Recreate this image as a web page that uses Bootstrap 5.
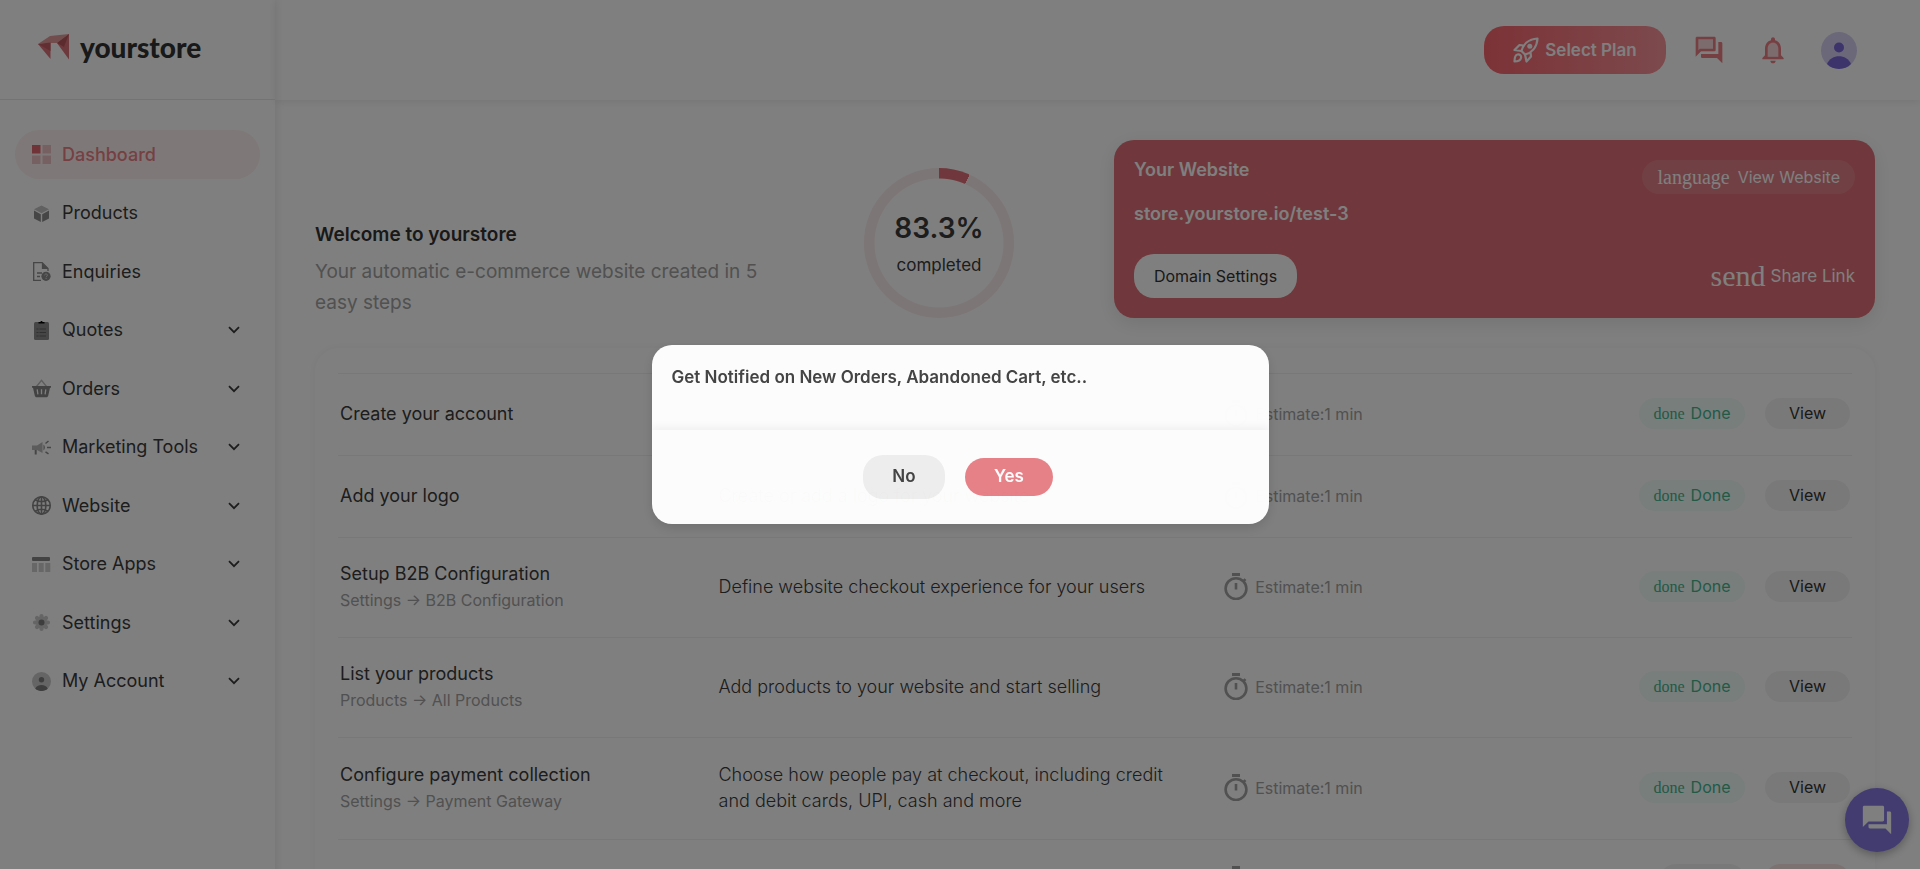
<!DOCTYPE html>
<html lang="en">
<head>
<meta charset="utf-8">
<meta name="viewport" content="width=device-width, initial-scale=1">
<title>yourstore – Dashboard</title>
<link href="https://cdn.jsdelivr.net/npm/bootstrap@5.3.0/dist/css/bootstrap.min.css" rel="stylesheet">
<style>
  :root { --brand: #ec8087; --brand-deep: #e07078; --ink: #3a3a3a; --soft: #a2a2a2; --line: #f0f0f0; }
  body { font-family: Inter, "Open Sans", sans-serif; font-size: 16px; line-height: 26px; color: var(--ink); background: #fff; min-height: 100vh; }
  .side { width: 275px; box-shadow: 2px 0 8px rgba(0,0,0,.08); z-index: 2; }
  .brand-bar { height: 100px; border-bottom: 1px solid #e6e6e6; padding: 0 37px 6px; gap: 10px; }
  .brand-name { font-family: Lato, sans-serif; font-weight: 900; font-size: 28px; line-height: 30px; color: #333; }
  .side-menu { height: 576px; margin: 30px 15px; }
  .side-link { height: 49px; padding: 0 20px 0 17px; border-radius: 25px; color: var(--ink); font-size: 18px; text-decoration: none; gap: 11px; }
  .side-link.active { background: #fff0f0; color: var(--brand); font-weight: 500; }
  .side-link .ico { width: 19px; height: 19px; flex: none; }
  .topbar { height: 100px; padding-right: 63px; gap: 32px; box-shadow: 0 2px 8px rgba(0,0,0,.08); }
  .plan-btn { width: 182px; height: 48px; border-radius: 20px; border: 0; color: #fff; font-weight: 600; font-size: 17px; background: linear-gradient(90deg,#f9666f,#f9949a); gap: 6px; margin-right: -5px; }
  .icon-btn { border: 0; background: none; padding: 0; line-height: 0; }
  .content { padding: 40px 45px 0 40px; }
  .welcome { width: 60%; }
  .welcome h1 { font-size: 19px; line-height: 26px; font-weight: 600; color: #333; }
  .welcome p { font-size: 19px; line-height: 31px; color: var(--soft); }
  .ring { width: 150px; height: 150px; border-radius: 50%; background: radial-gradient(closest-side,#fff 64px,transparent 65px), conic-gradient(var(--brand-deep) 24deg,#fbecec 0); }
  .ring strong { font-size: 28px; line-height: 40px; font-weight: 600; }
  .ring span { font-size: 17px; }
  .site-card { background: var(--brand-deep); color: #fff; border-radius: 20px; height: 178px; padding: 20px; box-shadow: 0 5px 20px rgba(0,0,0,.1); width: 761px; max-width: 100%; }
  .site-card .fw-semibold { font-size: 18px; line-height: 20px; }
  .serif-ico { font-family: "Liberation Serif", serif; }
  .view-site { height: 34px; padding: 0 15px; border-radius: 17px; background: rgba(255,255,255,.12); color: #fff; font-size: 16px; text-decoration: none; gap: 8px; }
  .view-site .serif-ico { font-size: 20px; }
  .domain-btn { height: 44px; width: 163px; border-radius: 20px; background: #fff; border: 0; font-size: 16px; color: #333; }
  .share { color: #fff; text-decoration: none; font-size: 17px; gap: 5px; }
  .share .serif-ico { font-size: 30px; }
  .steps { margin-top: 30px; padding: 25px 23px; border-radius: 24px; box-shadow: 0 0 10px rgba(0,0,0,.05); }
  .steps table { table-layout: fixed; width: 100%; }
  .steps tr { border-top: 1px solid var(--line); height: 82px; }
  .steps tr.tall { height: 100px; }
  .steps tr.taller { height: 102px; }
  .steps td { padding: 0 2px 2px; vertical-align: middle; }
  .step-title { font-size: 18px; }
  .step-path { font-size: 16px; color: var(--soft); }
  .step-text { font-size: 18px; font-weight: 300; }
  .estimate { font-size: 16px; color: var(--soft); gap: 7px; }
  .pill { height: 31px; border-radius: 16px; border: 0; font-size: 16px; line-height: 31px; padding: 0; }
  .pill-done { width: 106px; background: #f0fcf9; color: #45b58d; }
  .pill-done .serif-ico { font-size: 16px; margin-right: 6px; }
  .pill-view { width: 85px; background: #f3f3f3; color: #333; }
  .pill-pink { background: #fbe4e4; }
  .chat-fab { width: 64px; height: 64px; right: 11px; bottom: 17px; border: 0; background: #8578e0; box-shadow: 0 3px 10px rgba(0,0,0,.3); z-index: 5; }
  .ask { --bs-modal-width: 617px; }
  .ask .modal-content { border: 0; border-radius: 20px; overflow: hidden; background: #fff; opacity: .98; box-shadow: 0 4px 12px rgba(0,0,0,.12); }
  .ask-head { height: 85px; padding: 19px 20px; }
  .ask-head h2 { font-size: 17px; line-height: 26px; font-weight: 600; color: #444; }
  .ask-foot { height: 94px; gap: 20px; box-shadow: 0 -3px 8px rgba(0,0,0,.05); }
  .ask-foot button { border: 0; border-radius: 20px; font-size: 17px; font-weight: 600; padding: 0 0 2px; }
  .no-btn { width: 82px; height: 44px; background: #f0f0f0; color: #444; }
  .yes-btn { width: 88px; height: 38px; background: #ea8289; color: #fff; }
</style>
</head>
<body class="modal-open overflow-hidden">

<svg class="d-none">
  <symbol id="chev" viewBox="0 0 12 8"><path d="M1 1.2l5 5 5-5" fill="none" stroke="#3a3a3a" stroke-width="1.8"/></symbol>
  <symbol id="timer" viewBox="0 0 24 27"><path d="M8 0h8v3H8z"/><path d="M12 5.2a10.4 10.4 0 1 0 0 20.8 10.4 10.4 0 0 0 0-20.8zM12 10v6.5M19.5 8.2l2-2" fill="none" stroke="currentColor" stroke-width="2.6"/></symbol>
</svg>

<div class="d-flex min-vh-100">
  <aside class="side flex-shrink-0 position-relative">
    <div class="brand-bar d-flex align-items-center">
      <svg width="33" height="26" viewBox="0 0 33 26"><path d="M1 10L13 2 32 0 20 9H9z" fill="#e39a9c"/><path d="M1 10L13.500 25V9z" fill="#dc737a"/><path d="M1 10l12.500-1.500V17z" fill="#c45d64"/><path d="M32 0v25.500L20 9z" fill="#dc737a"/><path d="M32 0L20 9l7 4z" fill="#b9575d"/></svg>
      <span class="brand-name">yourstore</span>
    </div>
    <nav>
      <ul class="side-menu list-unstyled d-flex flex-column justify-content-between">
        <li><a href="#" class="side-link active d-flex align-items-center"><svg class="ico" viewBox="0 0 19 19"><path d="M0 0h8.5v8.5H0z" fill="#e0666e"/><path d="M10.5 0H19v8.500h-8.500zM0 10.500h8.500V19H0zM10.500 10.500H19V19h-8.500z" fill="#eec0c3"/></svg>Dashboard</a></li>
        <li><a href="#" class="side-link d-flex align-items-center"><svg class="ico" viewBox="0 0 19 19"><path d="M9.500 1.500L17 5.300 9.500 9.200 2 5.300z" fill="#c2c2c2"/><path d="M2 6.500l6.800 3.700V18L2 14.500zM17 6.500l-6.800 3.700V18l6.800-3.500z" fill="#8c8c8c"/></svg>Products</a></li>
        <li><a href="#" class="side-link d-flex align-items-center"><svg class="ico" viewBox="0 0 19 19"><path d="M9 18.300H1.700V.7h8.500L16 6.400V9M10.500.7v5.600H16M5 11h5M5 14.500h3" fill="none" stroke="#8c8c8c" stroke-width="1.300"/><path d="M10.300 1v5.300H16z" fill="#8c8c8c"/><circle cx="14" cy="14.300" r="4.600" fill="#8c8c8c"/><path d="M12.700 13.300c0-1.800 2.800-1.800 2.700 0 0 .9-1.300.9-1.300 2M14.100 16v1" fill="none" stroke="#ddd" stroke-width="1"/></svg>Enquiries</a></li>
        <li><a href="#" class="side-link d-flex align-items-center"><svg class="ico" viewBox="0 0 19 19"><rect x="2" y="1" width="15" height="18" rx="1.500" fill="#8c8c8c"/><path d="M6.500 2.500V1h1.800c.3-1.200 2.100-1.200 2.400 0h1.800v1.500z" fill="#000"/><path d="M4.500 8h2M7.500 8H14M4.500 11.500h2M7.500 11.500H14M4.500 15h2M7.500 15H14" stroke="#606060" stroke-width="1"/></svg>Quotes<svg class="ms-auto" width="12" height="8"><use href="#chev"/></svg></a></li>
        <li><a href="#" class="side-link d-flex align-items-center"><svg class="ico" viewBox="0 0 19 19"><path d="M4.500 7.500L9.500 1.300l5 6.200" fill="none" stroke="#bbb" stroke-width="1.400"/><path d="M0 7h19v1.800h-1l-1.800 8c-.2.900-.9 1.500-1.800 1.500H4.600c-.9 0-1.600-.6-1.800-1.500L1 8.800H0z" fill="#868686"/><path d="M5.200 10.300l.7 5M9.500 10.300v5M13.800 10.300l-.7 5" stroke="#fff" stroke-width="1.300"/></svg>Orders<svg class="ms-auto" width="12" height="8"><use href="#chev"/></svg></a></li>
        <li><a href="#" class="side-link d-flex align-items-center"><svg class="ico" viewBox="0 0 19 19"><path d="M0 7.500h5l5.500-3.500v11L5 12H0z" fill="#b8b8b8"/><path d="M2.700 12v4.500h2V12M11.500 6.500c1.800 1.500 1.800 4.500 0 6z" fill="#8c8c8c"/><path d="M13.500 5.500l3-2.500M15 9.500h4M13.500 13.800l3 2" stroke="#8c8c8c" stroke-width="1.500"/></svg>Marketing Tools<svg class="ms-auto" width="12" height="8"><use href="#chev"/></svg></a></li>
        <li><a href="#" class="side-link d-flex align-items-center"><svg class="ico" viewBox="0 0 19 19" fill="none" stroke="#868686" stroke-width="1.600"><circle cx="9.500" cy="9.500" r="8.700"/><ellipse cx="9.500" cy="9.500" rx="4.300" ry="8.700"/><path d="M9.500 1v17M1 9.500h17M3 3.800c4 2.400 9 2.400 13 0M3 15.200c4-2.400 9-2.400 13 0"/></svg>Website<svg class="ms-auto" width="12" height="8"><use href="#chev"/></svg></a></li>
        <li><a href="#" class="side-link d-flex align-items-center"><svg class="ico" viewBox="0 0 19 19"><rect y="2" width="18" height="4" rx="1" fill="#868686"/><path d="M0 8h5v9H0zM6.700 8h5v9h-5zM13.300 8h5v9h-5z" fill="#cfcfcf"/></svg>Store Apps<svg class="ms-auto" width="12" height="8"><use href="#chev"/></svg></a></li>
        <li><a href="#" class="side-link d-flex align-items-center"><svg class="ico" viewBox="0 0 19 19"><g stroke="#cacaca" stroke-width="4.200" stroke-linecap="round"><path d="M9.500 3v13M3 9.500h13M5 5l9 9M14 5l-9 9"/></g><circle cx="9.500" cy="9.500" r="3" fill="#7c7c7c"/></svg>Settings<svg class="ms-auto" width="12" height="8"><use href="#chev"/></svg></a></li>
        <li><a href="#" class="side-link d-flex align-items-center"><svg class="ico" viewBox="0 0 19 19"><circle cx="9.500" cy="9.500" r="9.500" fill="#cacaca"/><circle cx="9.500" cy="7.800" r="2.700" fill="#7c7c7c"/><path d="M3.300 16.700c1.500-5 10.900-5 12.400 0-3.400 3.100-9 3.100-12.400 0z" fill="#7c7c7c"/></svg>My Account<svg class="ms-auto" width="12" height="8"><use href="#chev"/></svg></a></li>
      </ul>
    </nav>
  </aside>

  <div class="flex-grow-1">
    <header class="topbar d-flex align-items-center justify-content-end">
      <button type="button" class="plan-btn d-flex align-items-center justify-content-center">
        <svg width="26" height="26" viewBox="0 0 26 26" fill="none" stroke="#fff" stroke-width="2.200" stroke-linejoin="round"><path d="M8.500 14C10 8 15 2 24.500 1.500 24 11 18 16 12 17.500z"/><circle cx="16.800" cy="9.200" r="2.500" fill="#fff" stroke="none"/><path d="M10.500 8.500L6.500 8l-5 5 7 1M17.500 15.500l.5 4-4.500 5-1.500-7M1.500 24.500c0-4 .5-6.500 3-7s4 1.500 3.500 3.500-3 3.500-6.500 3.500z"/></svg>
        Select Plan
      </button>
      <button type="button" class="icon-btn" aria-label="Messages"><svg width="32" height="32" viewBox="0 0 24 24"><path d="M3 3h13v10H6l-3 3z" fill="#f9d9da"/><path fill="#ec8087" d="M15 4v7H5.170L4 12.170V4h11m1-2H3c-.55 0-1 .45-1 1v14l4-4h10c.55 0 1-.45 1-1V3c0-.55-.45-1-1-1zm5 4h-2v9H6v2c0 .55.450 1 1 1h11l4 4V7c0-.55-.45-1-1-1z"/></svg></button>
      <button type="button" class="icon-btn" aria-label="Notifications"><svg width="32" height="32" viewBox="0 0 24 24"><path d="M7 17v-6c0-6 10-6 10 0v6z" fill="#f9d9da"/><path fill="#ec8087" d="M12 22c1.100 0 2-.9 2-2h-4c0 1.100.9 2 2 2zm6-6v-5c0-3.070-1.630-5.640-4.500-6.320V4c0-.83-.67-1.500-1.500-1.500s-1.500.67-1.500 1.500v.68C7.640 5.360 6 7.920 6 11v5l-2 2v1h16v-1l-2-2zm-2 1H8v-6c0-2.480 1.510-4.500 4-4.500s4 2.020 4 4.500v6z"/></svg></button>
      <button type="button" class="icon-btn" aria-label="Profile"><svg width="36" height="37" viewBox="0 0 36 37"><ellipse cx="18" cy="18.500" rx="18" ry="18.500" fill="#d6d2f2"/><circle cx="18" cy="15.500" r="5" fill="#7a68d8"/><path d="M6 32c4-10.500 20-10.500 24 0-6 6.500-18 6.500-24 0z" fill="#7a68d8"/></svg></button>
    </header>

    <main class="content">
      <section class="row g-0">
        <div class="col-6 d-flex align-items-end">
          <div class="welcome"><h1 class="mb-2">Welcome to yourstore</h1><p class="mb-0">Your automatic e-commerce website created in 5<br>easy steps</p></div>
          <div class="flex-grow-1 d-flex justify-content-center">
            <div class="ring d-flex flex-column align-items-center justify-content-center"><strong>83.3%</strong><span class="mt-1">completed</span></div>
          </div>
        </div>
        <div class="col-6 d-flex justify-content-end">
          <div class="site-card d-flex flex-column justify-content-between">
            <div class="d-flex justify-content-between align-items-start">
              <div class="d-flex flex-column gap-4"><span class="fw-semibold">Your Website</span><span class="fw-semibold">store.yourstore.io/test-3</span></div>
              <a href="#" class="view-site d-flex align-items-center"><span class="serif-ico">language</span>View Website</a>
            </div>
            <div class="d-flex justify-content-between align-items-center">
              <button type="button" class="domain-btn">Domain Settings</button>
              <a href="#" class="share d-flex align-items-center"><span class="serif-ico">send</span>Share Link</a>
            </div>
          </div>
        </div>
      </section>

      <section class="steps">
        <table>
          <colgroup><col style="width:25%"><col style="width:33.4%"><col><col style="width:20%"></colgroup>
          <tbody>
            <tr>
              <td><div class="step-title">Create your account</div></td><td></td>
              <td><div class="estimate d-flex align-items-center"><svg width="24" height="27" fill="currentColor"><use href="#timer"/></svg>Estimate:1 min</div></td>
              <td><div class="d-flex justify-content-end gap-3"><span class="pill pill-done text-center me-1"><span class="serif-ico">done</span>Done</span><button type="button" class="pill pill-view">View</button></div></td>
            </tr>
            <tr>
              <td><div class="step-title">Add your logo</div></td><td><div class="step-text">Create or add a logo for your website</div></td>
              <td><div class="estimate d-flex align-items-center"><svg width="24" height="27" fill="currentColor"><use href="#timer"/></svg>Estimate:1 min</div></td>
              <td><div class="d-flex justify-content-end gap-3"><span class="pill pill-done text-center me-1"><span class="serif-ico">done</span>Done</span><button type="button" class="pill pill-view">View</button></div></td>
            </tr>
            <tr class="tall">
              <td><div class="step-title">Setup B2B Configuration</div><div class="step-path">Settings → B2B Configuration</div></td><td><div class="step-text">Define website checkout experience for your users</div></td>
              <td><div class="estimate d-flex align-items-center"><svg width="24" height="27" fill="currentColor"><use href="#timer"/></svg>Estimate:1 min</div></td>
              <td><div class="d-flex justify-content-end gap-3"><span class="pill pill-done text-center me-1"><span class="serif-ico">done</span>Done</span><button type="button" class="pill pill-view">View</button></div></td>
            </tr>
            <tr class="tall">
              <td><div class="step-title">List your products</div><div class="step-path">Products → All Products</div></td><td><div class="step-text">Add products to your website and start selling</div></td>
              <td><div class="estimate d-flex align-items-center"><svg width="24" height="27" fill="currentColor"><use href="#timer"/></svg>Estimate:1 min</div></td>
              <td><div class="d-flex justify-content-end gap-3"><span class="pill pill-done text-center me-1"><span class="serif-ico">done</span>Done</span><button type="button" class="pill pill-view">View</button></div></td>
            </tr>
            <tr class="taller">
              <td><div class="step-title">Configure payment collection</div><div class="step-path">Settings → Payment Gateway</div></td><td><div class="step-text">Choose how people pay at checkout, including credit<br>and debit cards, UPI, cash and more</div></td>
              <td><div class="estimate d-flex align-items-center"><svg width="24" height="27" fill="currentColor"><use href="#timer"/></svg>Estimate:1 min</div></td>
              <td><div class="d-flex justify-content-end gap-3"><span class="pill pill-done text-center me-1"><span class="serif-ico">done</span>Done</span><button type="button" class="pill pill-view">View</button></div></td>
            </tr>
            <tr>
              <td></td><td></td>
              <td><div class="estimate d-flex align-items-center"><svg width="24" height="27" fill="currentColor"><use href="#timer"/></svg></div></td>
              <td><div class="d-flex justify-content-end gap-3"><button type="button" class="pill pill-view me-1" aria-label="Skip"></button><button type="button" class="pill pill-view pill-pink" aria-label="Start"></button></div></td>
            </tr>
          </tbody>
        </table>
      </section>
    </main>
  </div>
</div>

<button type="button" class="chat-fab position-fixed rounded-circle d-flex align-items-center justify-content-center" aria-label="Chat"><svg width="34" height="34" viewBox="0 0 24 24"><path fill="#fff" d="M21 6h-2v9H6v2c0 .55.450 1 1 1h11l4 4V7c0-.55-.45-1-1-1zm-4 6V3c0-.55-.45-1-1-1H3c-.55 0-1 .45-1 1v14l4-4h10c.55 0 1-.45 1-1z"/></svg></button>

<div class="modal-backdrop show"></div>
<div class="modal ask d-block" tabindex="-1" role="dialog" aria-modal="true" aria-labelledby="askTitle">
  <div class="modal-dialog modal-dialog-centered">
    <div class="modal-content">
      <div class="ask-head"><h2 id="askTitle" class="mb-0">Get Notified on New Orders, Abandoned Cart, etc..</h2></div>
      <div class="ask-foot d-flex align-items-center justify-content-center pe-1">
        <button type="button" class="no-btn">No</button>
        <button type="button" class="yes-btn">Yes</button>
      </div>
    </div>
  </div>
</div>
<script src="https://cdn.jsdelivr.net/npm/bootstrap@5.3.0/dist/js/bootstrap.bundle.min.js"></script>
</body>
</html>
